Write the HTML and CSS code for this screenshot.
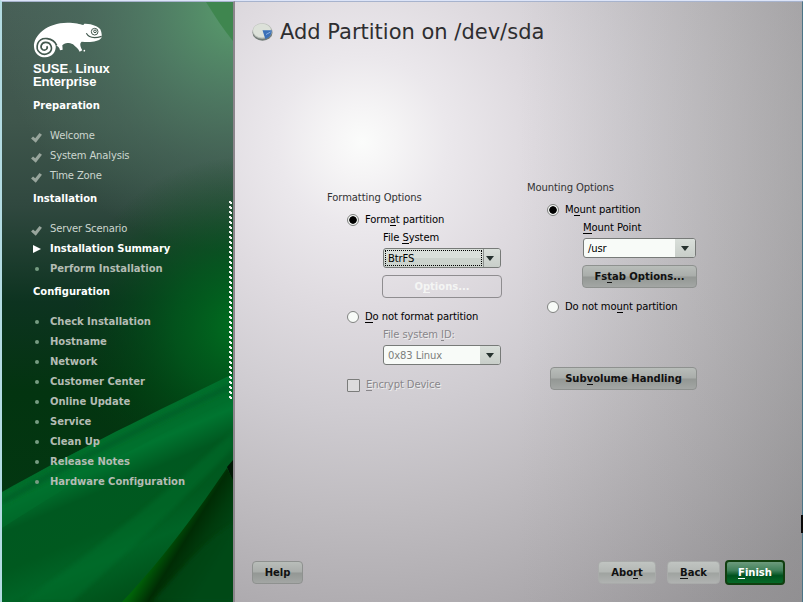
FILE: index.html
```
<!DOCTYPE html>
<html lang="en">
<head>
<meta charset="utf-8">
<title>Add Partition on /dev/sda</title>
<link rel="stylesheet" href="styles.css">
</head>
<body>
<div class="window">
  <aside class="sidebar">
    <svg class="art" viewBox="0 0 231 600" preserveAspectRatio="none" aria-hidden="true">
      <defs>
        <linearGradient id="base" x1="0" y1="0" x2="0" y2="1">
          <stop offset="0" stop-color="#485f57"/><stop offset=".2" stop-color="#3f564c"/>
          <stop offset=".34" stop-color="#30483f"/><stop offset=".5" stop-color="#0d3320"/>
          <stop offset=".65" stop-color="#033410"/><stop offset="1" stop-color="#023a12"/>
        </linearGradient>
        <radialGradient id="sheen" gradientUnits="userSpaceOnUse" cx="235" cy="10" r="240">
          <stop offset="0" stop-color="#589d6c"/><stop offset=".35" stop-color="#528468" stop-opacity=".75"/>
          <stop offset=".65" stop-color="#4c7060" stop-opacity=".5"/><stop offset="1" stop-color="#4c7060" stop-opacity="0"/>
        </radialGradient>
        <radialGradient id="glow" gradientUnits="userSpaceOnUse" cx="240" cy="325" r="170">
          <stop offset="0" stop-color="#007020"/><stop offset=".4" stop-color="#005c1c" stop-opacity=".75"/><stop offset="1" stop-color="#004010" stop-opacity="0"/>
        </radialGradient>
        <linearGradient id="leaf" gradientUnits="userSpaceOnUse" x1="80" y1="435" x2="150" y2="600">
          <stop offset="0" stop-color="#00702c"/><stop offset=".1" stop-color="#006b2a"/><stop offset=".18" stop-color="#007530"/>
          <stop offset=".32" stop-color="#005820"/><stop offset=".52" stop-color="#00591f"/><stop offset=".68" stop-color="#006426"/>
          <stop offset=".86" stop-color="#00551c"/><stop offset="1" stop-color="#004c16"/>
        </linearGradient>
        <linearGradient id="fold" gradientUnits="userSpaceOnUse" x1="168" y1="515" x2="225" y2="550">
          <stop offset="0" stop-color="#006c0c"/><stop offset=".12" stop-color="#006008"/><stop offset=".38" stop-color="#002c04"/>
          <stop offset=".6" stop-color="#003a0c"/><stop offset="1" stop-color="#004a18"/>
        </linearGradient>
        <filter id="soft"><feGaussianBlur stdDeviation="2"/></filter>
      </defs>
      <rect width="231" height="600" fill="url(#base)"/>
      <rect width="231" height="300" fill="url(#sheen)"/>
      <rect y="130" width="231" height="470" fill="url(#glow)"/>
      <path d="M204 0C214 16 222 28 231 39V0Z" fill="#3f864f"/>
      <path d="M0 490C60 456 130 421 231 372V600H0Z" fill="url(#leaf)"/>
      <path d="M0 491C60 456 130 421 231 374V396C140 440 80 475 0 526Z" fill="#00702d" opacity=".6"/>
      <path d="M0 500C70 460 140 425 231 383" fill="none" stroke="#006126" stroke-width="5" filter="url(#soft)"/>
      <path d="M70 600C120 555 175 505 231 446V430C160 495 90 550 20 600Z" fill="#00742e" opacity=".4" filter="url(#soft)"/>
      <path d="M231 458L225 465L231 480Z" fill="#001604"/>
      <path d="M225 466L231 478V600H120C160 558 195 510 225 466Z" fill="url(#fold)"/>
      <path d="M231 522V600H150C178 570 200 540 231 522Z" fill="#004a17" opacity=".65" filter="url(#soft)"/>
    </svg>
    <div class="brand">
      <svg class="logo" viewBox="97 64 210 108" aria-label="SUSE">
        <path fill="#fff" d="M100 138C98 104 140 66 200 66C224 66 238 70 248 73L251 69C274 68 294 78 299 86C304 98 304 108 302 112C292 124 270 125 243 123C236 128 239 138 245 149L237 153C232 143 224 138 217 131C204 124 190 126 185 134L186 147L178 149C177 141 171 136 165 133C168 154 153 169 134 170C115 170 101 158 100 138Z"/>
        <path d="M168 134C158 111 121 105 111 129C103 152 126 168 144 157C160 146 151 124 134 125C121 126 117 141 126 147C135 151 143 143 138 137" fill="none" stroke="#43594f" stroke-width="5"/>
        <circle cx="282" cy="93" r="10" fill="#fff" stroke="#43594f" stroke-width="3"/>
        <circle cx="283" cy="92" r="4" fill="none" stroke="#43594f" stroke-width="3"/>
        <path d="M257 98C265 112 284 113 303 107" fill="none" stroke="#43594f" stroke-width="3.5"/>
        <circle cx="251" cy="150" r="2.5" fill="#fff"/>
      </svg>
      <div class="name">SUSE<i></i> Linux<br>Enterprise</div>
    </div>
    <nav>
      <h2>Preparation</h2>
      <ul>
        <li class="done"><svg viewBox="0 0 12 11"><path d="M0 6L2.2 3.8L4.6 5.8L9.3 0L12 1.8L5.2 10.8Z"/></svg>Welcome</li>
        <li class="done"><svg viewBox="0 0 12 11"><path d="M0 6L2.2 3.8L4.6 5.8L9.3 0L12 1.8L5.2 10.8Z"/></svg>System Analysis</li>
        <li class="done"><svg viewBox="0 0 12 11"><path d="M0 6L2.2 3.8L4.6 5.8L9.3 0L12 1.8L5.2 10.8Z"/></svg>Time Zone</li>
      </ul>
      <h2>Installation</h2>
      <ul>
        <li class="done"><svg viewBox="0 0 12 11"><path d="M0 6L2.2 3.8L4.6 5.8L9.3 0L12 1.8L5.2 10.8Z"/></svg>Server Scenario</li>
        <li class="current">Installation Summary</li>
        <li>Perform Installation</li>
      </ul>
      <h2>Configuration</h2>
      <ul>
        <li>Check Installation</li>
        <li>Hostname</li>
        <li>Network</li>
        <li>Customer Center</li>
        <li>Online Update</li>
        <li>Service</li>
        <li>Clean Up</li>
        <li>Release Notes</li>
        <li>Hardware Configuration</li>
      </ul>
    </nav>
    <svg class="grip" width="3" height="199" aria-hidden="true">
      <defs><pattern id="dots" width="3" height="5" patternUnits="userSpaceOnUse"><path d="M0 0h2v1h1v2H1V2H0Z" fill="#f1f5f1"/></pattern></defs>
      <rect width="3" height="199" fill="url(#dots)"/>
    </svg>
  </aside>
  <main>
    <header>
      <svg class="disk" viewBox="0 0 21 18">
        <ellipse cx="10.5" cy="9.7" rx="10" ry="8" fill="#737c78"/>
        <ellipse cx="10.3" cy="8" rx="9.8" ry="7.7" fill="#b9beb8"/>
        <ellipse cx="10" cy="7.7" rx="9" ry="6.9" fill="#dce1d9"/>
        <path d="M10.5 7.2H19.8C19.8 11.5 17 15 13.3 16Z" fill="#3b70b8"/>
        <path d="M14 11.5L18.5 9" stroke="#8bb0e0" stroke-width="1"/>
      </svg>
      <h1>Add Partition on /dev/sda</h1>
    </header>
    <form class="options">
      <section class="formatting">
        <h3>Formatting Options</h3>
        <label class="choice"><span class="radio on"></span><span>Form<u>a</u>t partition</span></label>
        <div class="fields">
          <label class="caption">File <u>S</u>ystem</label>
          <div class="combo list"><span class="value"><span>BtrFS</span></span><span class="drop"></span></div>
          <button type="button" class="btn ghost">O<u>p</u>tions...</button>
        </div>
        <label class="choice second"><span class="radio"></span><span><u>D</u>o not format partition</span></label>
        <div class="fields">
          <label class="caption off">File system <u>I</u>D:</label>
          <div class="combo off-value"><span class="value"><span>0x83 Linux</span></span><span class="drop"></span></div>
        </div>
        <label class="choice encrypt"><span class="check"></span><span><u>E</u>ncrypt Device</span></label>
      </section>
      <section class="mounting">
        <h3>Mounting Options</h3>
        <label class="choice"><span class="radio on"></span><span>M<u>o</u>unt partition</span></label>
        <div class="fields">
          <label class="caption"><u>M</u>ount Point</label>
          <div class="combo"><span class="value"><span>/usr</span></span><span class="drop"></span></div>
          <button type="button" class="btn">Fs<u>t</u>ab Options...</button>
        </div>
        <label class="choice second"><span class="radio"></span><span>Do not mo<u>u</u>nt partition</span></label>
        <button type="button" class="btn subvolume">Sub<u>v</u>olume Handling</button>
      </section>
    </form>
    <footer>
      <button type="button" class="btn help">Help</button>
      <button type="button" class="btn light abort">Abo<u>r</u>t</button>
      <button type="button" class="btn light back"><u>B</u>ack</button>
      <button type="button" class="btn finish"><u>F</u>inish</button>
    </footer>
    <div class="edge-mark"></div>
  </main>
</div>
</body>
</html>
```
FILE: styles.css
```
* { box-sizing: border-box; }
body { margin: 0; font: 10px/14px "DejaVu Sans", sans-serif; letter-spacing: -.1px; color: #000; overflow: hidden; }
h1, h2, h3, ul { margin: 0; padding: 0; font-weight: normal; font-size: inherit; }
u { text-decoration: none; border-bottom: 1px solid currentColor; display: inline-block; line-height: 11px; }

.window { width: 803px; height: 602px; display: grid; grid-template-columns: 233px 568px; border-top: 1px solid #dce4f8; border-left: 2px solid #b3dbe2; }

.sidebar { position: relative; border-top: 1px solid #a7b3cd; border-right: 2px solid #8b858b; padding: 20px 0 0 31px; overflow: hidden; }
.art { position: absolute; left: 0; top: 0; width: 231px; height: 600px; }
.brand, nav { position: relative; }
.brand { height: 74px; }
.logo { display: block; width: 70px; height: 36px; }
.name { margin-top: 4px; color: #fff; font: bold 13px/13px "Liberation Sans", sans-serif; }
.name i { display: inline-block; width: 3px; height: 3px; margin-left: 1px; border-radius: 50%; background: #9db0a6; }
nav h2 { height: 20px; line-height: 20px; font-weight: bold; letter-spacing: 0; color: #fff; margin-bottom: 10px; }
nav ul { list-style: none; margin-bottom: 3px; }
nav li { position: relative; height: 20px; line-height: 20px; padding-left: 17px; font-weight: bold; letter-spacing: -.03px; color: #b4bcb4; }
nav li::before { content: ""; position: absolute; left: 2px; top: 8px; width: 4px; height: 4px; border-radius: 50%; background: #779c82; }
nav li.done { font-weight: normal; letter-spacing: -.15px; color: #ccd6cf; }
nav li.done::before { display: none; }
nav li svg { position: absolute; left: -3px; top: 7px; width: 13px; height: 10px; fill: #98a59c; }
nav li.current { color: #fff; }
nav li.current::before { left: 0; top: 6px; width: 0; height: 0; border-radius: 0; background: none; border: solid transparent; border-width: 4px 0 4px 8px; border-left-color: #fff; }
.grip { position: absolute; right: 1px; top: 199px; }

main { position: relative; border-top: 1px solid #a7b3cd; border-right: 1px solid #4b7587; padding: 0 17px; display: flex; flex-direction: column;
  background: radial-gradient(circle at 127px 140px, #fbfcfb 0, #f5f4f5 35px, #ebe8ec 85px, #dfdbe0 165px, #cfccd1 270px, #bfbcc0 370px, #adaaae 480px, #9a979b 590px, #928f93 680px); }
main::before { content: ""; position: absolute; inset: 0; background: linear-gradient(90deg, transparent 50%, rgba(125,130,125,.2)); }
header, form, footer { position: relative; }
header { height: 60px; display: flex; align-items: center; gap: 7px; }
.disk { width: 21px; height: 18px; }
h1 { font-size: 21px; line-height: 24px; letter-spacing: 0; color: #2e2e30; white-space: nowrap; }

.options { height: 480px; display: grid; grid-template-columns: 200px 170px; padding-left: 75px; align-items: start; }
.formatting { padding-top: 129px; }
.mounting { padding-top: 119px; }
h3 { height: 14px; color: #333; white-space: nowrap; }
.choice { display: flex; align-items: center; gap: 6px; height: 14px; margin: 8px 0 4px 20px; white-space: nowrap; }
.radio { width: 12px; height: 12px; flex: none; border: 1px solid #808280; border-radius: 50%; background: #f8fbf8; }
.radio.on { background: radial-gradient(circle, #000 0 3.4px, #f4f6f4 4.1px); }
.check { width: 13px; height: 13px; flex: none; border: 1px solid #7b7c7b; background: #dcdbdc; border-radius: 1px; }
.fields { padding-left: 56px; display: flex; flex-direction: column; }
.caption { height: 14px; }
.caption.off, .encrypt { color: #88868a; text-shadow: 1px 1px #eee; }
.combo { display: flex; width: 118px; height: 20px; margin-top: 3px; border: 1px solid #777a78; border-radius: 3px; background: #f8fbf8; overflow: hidden; }
.combo .value { flex: 1; line-height: 19px; padding-left: 4px; }
.combo .drop { width: 20px; background: linear-gradient(#d9dfda, #c8cec9); display: flex; justify-content: center; align-items: center; }
.combo .drop::after { content: ""; border: solid transparent; border-width: 5px 4px 0; border-top-color: #26322f; }
.combo.list { background: linear-gradient(#d9dfda 50%, #ccd3cd 50%); }
.combo.list .value { margin: 1px; border: 1px dotted #000; line-height: 15px; padding-left: 2px; }
.combo.list .drop { width: 17px; padding-right: 5px; border-left: 1px solid #8e928f; }
.off-value { color: #7c807d; }
.mounting .combo { width: 113px; }

.btn { font: bold 10px/14px "DejaVu Sans", sans-serif; color: #111; height: 23px; padding: 1px 0 0; border: 1px solid #8e918f; border-radius: 4px; background: linear-gradient(#b8bdb9, #a9adaa 48%, #939794 52%, #a3a6a4); white-space: nowrap; }
.fields .btn { width: 120px; margin: 7px 0 0 -1px; }
.mounting .fields .btn { width: 115px; }
.btn.ghost { border-color: #8f8d90; background: none; color: #f4f5f4; }
.second { margin-top: 12px; }
.encrypt { margin-top: 13px; }
.subvolume { display: block; width: 147px; margin: 53px 0 0 23px; }
footer { display: flex; align-items: center; height: 60px; padding-top: 1px; }
.help { width: 51px; margin-right: auto; }
.abort { width: 58px; margin-right: 11px; }
.back { width: 53px; margin-right: 5px; }
.light { border-color: #a9abaa; background: linear-gradient(#c0c4c1, #b3b7b4 48%, #9fa3a0 52%, #b0b2b1); }
.finish { width: 60px; height: 25px; border: 2px solid #113f10; color: #fff; background: linear-gradient(#6d9b7d, #40805a 40%, #00521e 65%, #066a28); }
.edge-mark { position: absolute; right: -1px; top: 513px; width: 2px; height: 18px; background: #080808; }
```
